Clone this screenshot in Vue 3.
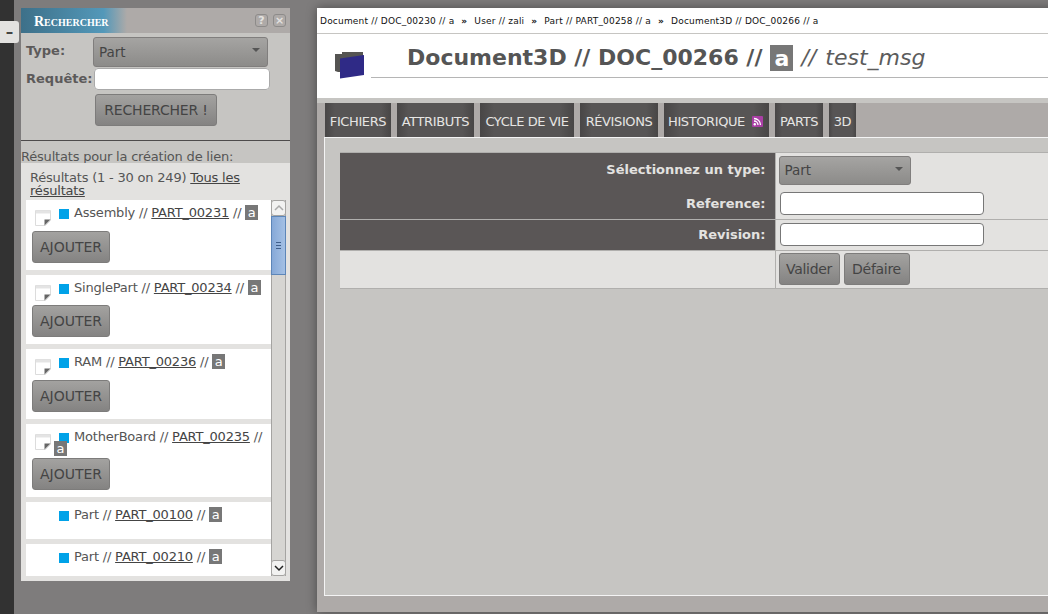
<template>
  <div class="page">
    <div class="rail"></div>
    <button class="toggle">–</button>

    <div class="side">
      <div class="panel">
        <div class="panelTitle">
          <span class="titleGlow">Rechercher</span>
          <span class="titleBtn">?</span>
          <span class="titleBtn">×</span>
        </div>
        <div class="searchForm">
          <div class="formRow typeRow">
            <label>Type:</label>
            <div class="select">Part<span class="caret"></span></div>
          </div>
          <div class="formRow queryRow">
            <label>Requête:</label>
            <input type="text" />
          </div>
          <button class="btn searchBtn">RECHERCHER !</button>
        </div>
        <div class="resultsTitle">Résultats pour la création de lien:</div>
        <div class="results">
          <div class="count">Résultats (1 - 30 on 249) <a>Tous les résultats</a></div>
          <div class="listWrap">
            <div class="list">
              <div class="item" v-for="item in items" :key="item.ref" :style="{ height: item.h + 'px' }">
                <svg v-if="item.add" class="note" width="18" height="18" viewBox="0 0 18 18">
                  <path d="M1.5 1.5h15v10l-5 5h-10z" fill="#fff" stroke="#dcdcdc" />
                  <path d="M2 1.5h14v3h-14z" fill="#e4e4e4" />
                  <path d="M10.500 16.500v-6h6z" fill="#666" />
                </svg>
                <div class="itemText"><span class="square"></span>{{ item.type }} // <a>{{ item.ref }}</a> // <b class="rev">a</b></div>
                <button v-if="item.add" class="btn addBtn">AJOUTER</button>
              </div>
            </div>
            <div class="scrollbar">
              <div class="arrow up">
                <svg width="12" height="8" viewBox="0 0 12 8"><path d="M2 6l4-4 4 4" fill="none" stroke="#aaa" stroke-width="1.500" /></svg>
              </div>
              <div class="thumb"><i></i><i></i><i></i></div>
              <div class="track"></div>
              <div class="arrow down">
                <svg width="12" height="8" viewBox="0 0 12 8"><path d="M2 2l4 4 4-4" fill="none" stroke="#222" stroke-width="1.500" /></svg>
              </div>
            </div>
          </div>
        </div>
      </div>
    </div>

    <div class="main">
      <div class="crumbs">
        <template v-for="(c, i) in crumbs" :key="c">
          <span>{{ c }}</span><span v-if="i < crumbs.length - 1" class="sep">»</span>
        </template>
      </div>
      <div class="head">
        <svg class="docIcon" width="32" height="32" viewBox="0 0 32 32">
          <path d="M1 5h7V3h21v9H1z" fill="#555452" />
          <path d="M1 5h28v18H4l-3-1z" fill="#555452" />
          <path d="M6 9.500L30 6v20L6 29.500z" fill="#2f2a86" />
        </svg>
        <h1 class="title">
          <strong>Document3D // DOC_00266 //</strong>
          <b class="bigRev">a</b>
          <em>// test_msg</em>
        </h1>
      </div>
      <div class="tabGap"></div>
      <div class="tabs">
        <span class="tab" v-for="t in tabs" :key="t.label" :style="{ width: t.w + 'px' }">
          {{ t.label }}
          <svg v-if="t.label === 'HISTORIQUE'" class="rss" width="11" height="11" viewBox="0 0 11 11">
            <rect width="11" height="11" rx="1" fill="#a93fa5" />
            <circle cx="2.800" cy="8.200" r="1.200" fill="#fff" />
            <path d="M2 5a4 4 0 0 1 4 4M2 2.500A6.500 6.500 0 0 1 8.500 9" fill="none" stroke="#fff" stroke-width="1.300" />
          </svg>
        </span>
      </div>
      <div class="frame">
        <table class="creation">
          <tbody>
            <tr class="typeLine">
              <th>Sélectionnez un type:</th>
              <td><div class="select small">Part<span class="caret"></span></div></td>
            </tr>
            <tr class="refLine">
              <th>Reference:</th>
              <td><input type="text" /></td>
            </tr>
            <tr class="revLine">
              <th>Revision:</th>
              <td><input type="text" /></td>
            </tr>
            <tr class="actions">
              <th></th>
              <td>
                <button class="btn validBtn">Valider</button>
                <button class="btn undoBtn">Défaire</button>
              </td>
            </tr>
          </tbody>
        </table>
      </div>
    </div>
  </div>
</template>

<script setup>
const items = [
  { type: 'Assembly', ref: 'PART_00231', add: true, h: 70 },
  { type: 'SinglePart', ref: 'PART_00234', add: true, h: 69 },
  { type: 'RAM', ref: 'PART_00236', add: true, h: 70 },
  { type: 'MotherBoard', ref: 'PART_00235', add: true, h: 73 },
  { type: 'Part', ref: 'PART_00100', add: false, h: 37 },
  { type: 'Part', ref: 'PART_00210', add: false, h: 32 }
]

const crumbs = [
  'Document // DOC_00230 // a',
  'User // zali',
  'Part // PART_00258 // a',
  'Document3D // DOC_00266 // a'
]

const tabs = [
  { label: 'FICHIERS', w: 66 },
  { label: 'ATTRIBUTS', w: 77 },
  { label: 'CYCLE DE VIE', w: 94 },
  { label: 'RÉVISIONS', w: 78 },
  { label: 'HISTORIQUE', w: 105 },
  { label: 'PARTS', w: 48 },
  { label: '3D', w: 27 }
]
</script>

<style>
html, body {
  margin: 0;
  overflow: hidden;
}
</style>

<style scoped>
.page {
  width: 1048px;
  height: 614px;
  display: flex;
  position: relative;
  overflow: hidden;
  background-color: #7e7c7c;
  font-family: "DejaVu Sans", sans-serif;
  font-size: 13px;
  color: #555;
}

.rail {
  width: 14px;
  flex: none;
  background-color: #323232;
}

.toggle {
  position: absolute;
  left: 0;
  top: 21px;
  width: 19px;
  height: 22px;
  padding: 0;
  border: 0;
  border-radius: 0 3px 3px 0;
  background-color: #e3e2e0;
  color: #444;
  font: bold 15px "DejaVu Sans", sans-serif;
}

.side {
  width: 303px;
  flex: none;
  padding: 8px 27px 33px 7px;
  box-sizing: border-box;
}

.panel {
  height: 573px;
  display: flex;
  flex-direction: column;
  background-color: #c6c5c2;
}

.panelTitle {
  height: 25px;
  flex: none;
  display: flex;
  align-items: center;
  gap: 5px;
  padding-right: 4px;
  background-color: #aeaaa8;
  box-sizing: border-box;
}

.titleGlow {
  width: 106px;
  height: 25px;
  margin-right: auto;
  padding-left: 13px;
  line-height: 27px;
  background: linear-gradient(90deg, #3d7089 0, #5398b9 78%, #aeaaa8 100%);
  color: #fff;
  font-family: "Liberation Serif", serif;
  font-size: 14px;
  font-weight: bold;
  font-variant: small-caps;
  white-space: nowrap;
  box-sizing: border-box;
}

.titleBtn {
  width: 11px;
  height: 11px;
  border: 1px solid #8d8b8a;
  border-radius: 3px;
  color: #e3e2e0;
  font-size: 11px;
  font-weight: bold;
  line-height: 11px;
  text-align: center;
}

.searchForm {
  height: 107px;
  flex: none;
  border-bottom: 1px solid #4d4b4b;
  box-sizing: content-box;
}

.formRow {
  display: flex;
  align-items: center;
}

.formRow label {
  width: 67px;
  margin-left: 5px;
  flex: none;
  font-weight: bold;
  color: #5c5a5a;
  white-space: nowrap;
}

.typeRow {
  height: 30px;
  margin-top: 4px;
  align-items: flex-start;
}

.typeRow label {
  line-height: 27px;
}

.queryRow {
  height: 22px;
  margin-top: 1px;
}

.queryRow label {
  margin-top: -2px;
}

.select {
  width: 175px;
  height: 30px;
  padding-left: 5px;
  border: 1px solid #807e7d;
  border-radius: 3px;
  position: relative;
  background: linear-gradient(#a5a4a2, #8c8b89);
  line-height: 28px;
  font-size: 13.5px;
  color: #444;
  box-sizing: border-box;
}

.select.small {
  width: 132px;
  height: 29px;
  line-height: 26px;
}

.caret {
  position: absolute;
  right: 7px;
  top: 10px;
  border: 4px solid transparent;
  border-top: 4px solid #555;
  border-bottom: 0;
  width: 0;
  height: 0;
}

input {
  display: block;
  padding: 0;
  border: 1px solid #777;
  border-radius: 4px;
  background-color: #fff;
  box-sizing: border-box;
}

.queryRow input {
  width: 176px;
  height: 22px;
  margin-left: 1px;
  border-color: #eee;
  outline: 1px solid #aaa;
  outline-offset: -1px;
}

.btn {
  height: 32px;
  padding: 0;
  border: 1px solid #7d7c7b;
  border-radius: 3px;
  background: linear-gradient(#a3a2a0, #848382);
  color: #444;
  font-family: "DejaVu Sans", sans-serif;
  font-size: 14px;
}

.searchBtn {
  display: block;
  width: 122px;
  margin: 4px 0 0 74px;
  letter-spacing: -0.2px;
}

.resultsTitle {
  height: 22px;
  flex: none;
  line-height: 31px;
  white-space: nowrap;
  letter-spacing: -0.2px;
}

.results {
  flex: 1;
  min-height: 0;
  display: flex;
  flex-direction: column;
  background-color: #e3e2e0;
  padding: 8px 5px 5px;
  letter-spacing: -0.2px;
  box-sizing: border-box;
}

.count {
  height: 29px;
  margin: 0 0 0 4px;
  line-height: 13px;
  flex: none;
}

a {
  text-decoration: underline;
  color: #444;
}

.listWrap {
  flex: 1;
  min-height: 0;
  display: flex;
}

.list {
  width: 245px;
  flex: none;
  overflow: hidden;
  display: flex;
  flex-direction: column;
  gap: 5px;
}

.item {
  flex: none;
  display: flex;
  flex-direction: column;
  position: relative;
  background-color: #fff;
  padding: 7px 6px 7px 28px;
  box-sizing: border-box;
  line-height: 11px;
}

.note {
  position: absolute;
  left: 8px;
  top: 9px;
}

.square {
  display: inline-block;
  width: 10px;
  height: 10px;
  margin: 0 5px;
  vertical-align: -2px;
  background-color: #00a2e8;
}

.rev {
  padding: 0 2.5px;
  background-color: #777;
  color: #fff;
  font-weight: normal;
  letter-spacing: 0;
}

.addBtn {
  margin: auto 0 0 -22px;
  width: 78px;
  letter-spacing: 0;
}

.scrollbar {
  width: 13px;
  flex: none;
  display: flex;
  flex-direction: column;
  background-color: #d6d5d2;
  border: 1px solid #a5a4a2;
  border-width: 0 1px;
}

.arrow {
  height: 14px;
  flex: none;
  background-color: #f2f2f1;
  border: 1px solid #a5a4a2;
  border-radius: 3px;
  margin: 0 -1px;
  display: flex;
  align-items: center;
  justify-content: center;
}

.thumb {
  height: 59px;
  flex: none;
  margin: 0 -1px;
  display: flex;
  flex-direction: column;
  align-items: center;
  justify-content: center;
  gap: 2px;
  border: 1px solid #5d86b8;
  background: linear-gradient(90deg, #86a9d8, #a4c0e4);
  box-sizing: border-box;
}

.thumb i {
  width: 5px;
  height: 1px;
  background-color: #3f5f8c;
}

.track {
  flex: 1;
}

.main {
  flex: 1;
  margin-top: 8px;
  margin-bottom: 2px;
  display: flex;
  flex-direction: column;
  background-color: #aeaaa8;
  box-shadow: 0 0 10px rgba(0, 0, 0, 0.4);
}

.crumbs {
  height: 26px;
  flex: none;
  padding-left: 3px;
  display: flex;
  align-items: center;
  gap: 6px;
  background-color: #fff;
  border-bottom: 1px solid #c6c5c2;
  color: #111;
  font-size: 9px;
  letter-spacing: 0.2px;
  white-space: nowrap;
  box-sizing: border-box;
}

.sep {
  margin: 0 1px;
  font-weight: bold;
}

.head {
  height: 64px;
  flex: none;
  position: relative;
  padding-left: 54px;
  background-color: #fff;
  box-sizing: border-box;
}

.docIcon {
  position: absolute;
  left: 17px;
  top: 15px;
}

.title {
  height: 44px;
  margin: 0;
  padding: 4px 0 0 36px;
  display: flex;
  align-items: center;
  gap: 8px;
  border-bottom: 1px solid #b5b5b5;
  font-size: 22px;
  font-weight: normal;
  white-space: nowrap;
  color: #555;
  box-sizing: border-box;
}

.title em {
  color: #5c5c5c;
  word-spacing: 2px;
}

.bigRev {
  width: 23px;
  height: 26px;
  background-color: #777;
  color: #fff;
  line-height: 27px;
  text-align: center;
}

.tabGap {
  height: 5px;
  flex: none;
  background-color: #c6c5c2;
}

.tabs {
  height: 34px;
  flex: none;
  display: flex;
  gap: 6px;
  padding-left: 8px;
}

.tab {
  height: 34px;
  padding-top: 2px;
  display: flex;
  align-items: center;
  justify-content: center;
  gap: 7px;
  background: linear-gradient(90deg, #484646, #575555 15%, #575555 85%, #484646);
  color: #e6e5e3;
  font-size: 13px;
  letter-spacing: -0.4px;
  white-space: nowrap;
  box-sizing: border-box;
}

.rss {
  margin-right: 2px;
}

.frame {
  height: 459px;
  flex: none;
  margin-left: 7px;
  padding: 14px 0 0 15px;
  border: 1px solid #f4f4f4;
  border-right: 0;
  background-color: #c6c5c2;
  box-sizing: border-box;
}

.creation {
  width: 720px;
  border-collapse: collapse;
  table-layout: fixed;
  border-top: 1px solid #b0afad;
}

.creation th {
  width: 435px;
  padding: 0 9px 0 0;
  background-color: #5a5656;
  color: #e3e2e0;
  text-align: right;
  font-size: 13px;
  box-sizing: border-box;
  border-top: 1px solid #b0afad;
}

.creation td {
  padding: 0 3px;
  background-color: #e3e2e0;
  border-left: 1px solid #b0afad;
  border-top: 1px solid #b0afad;
}

.creation .typeLine {
  height: 34px;
}

.creation .typeLine td {
  padding-top: 1px;
}

.creation .refLine {
  height: 33px;
}

.creation .refLine th,
.creation .refLine td {
  border-top: 0;
  padding-top: 2px;
}

.creation .revLine {
  height: 31px;
}

.creation .revLine th,
.creation .revLine td {
  padding-bottom: 2px;
}

.creation td input {
  width: 204px;
  height: 23px;
  margin-left: 1px;
}

.creation .actions {
  height: 38px;
  border-bottom: 1px solid #b0afad;
}

.creation .actions th {
  background-color: #e3e2e0;
}

.creation .actions td {
  padding-bottom: 2px;
}

.actions .btn {
  margin-right: 4px;
  letter-spacing: -0.3px;
  vertical-align: top;
}

.validBtn {
  width: 61px;
}

.undoBtn {
  width: 66px;
}
</style>
